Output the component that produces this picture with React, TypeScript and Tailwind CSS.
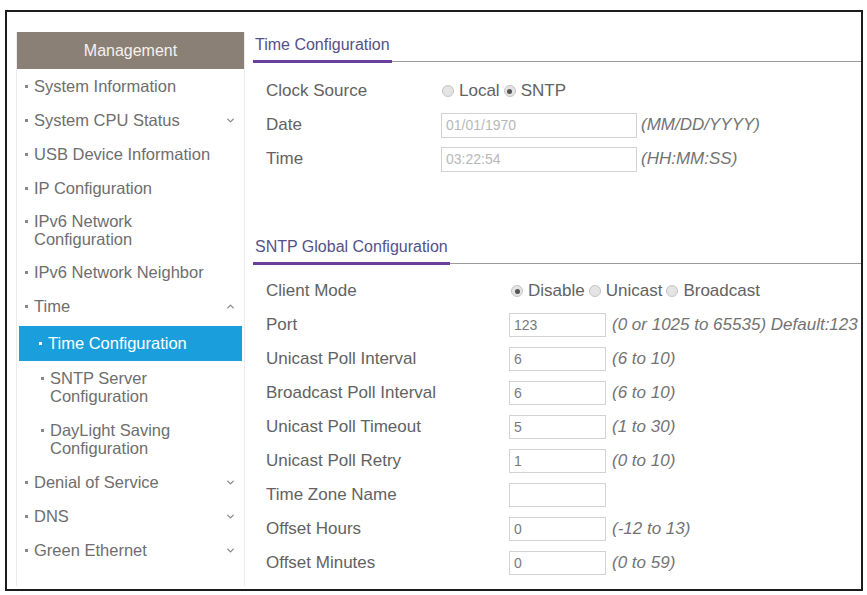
import { ChevronDown, ChevronUp } from "lucide-react";

type NavItem = {
  lines: string[];
  sub?: boolean;
  active?: boolean;
  chevron?: "down" | "up";
};

const navItems: NavItem[] = [
  { lines: ["System Information"] },
  { lines: ["System CPU Status"], chevron: "down" },
  { lines: ["USB Device Information"] },
  { lines: ["IP Configuration"] },
  { lines: ["IPv6 Network", "Configuration"] },
  { lines: ["IPv6 Network Neighbor"] },
  { lines: ["Time"], chevron: "up" },
  { lines: ["Time Configuration"], sub: true, active: true },
  { lines: ["SNTP Server", "Configuration"], sub: true },
  { lines: ["DayLight Saving", "Configuration"], sub: true },
  { lines: ["Denial of Service"], chevron: "down" },
  { lines: ["DNS"], chevron: "down" },
  { lines: ["Green Ethernet"], chevron: "down" },
];

function SideItem({ item }: { item: NavItem }) {
  if (item.active) {
    return (
      <div className="pt-[3px] px-[2px]">
        <div className="flex items-center h-[35px] pl-[20px] bg-[#1a9fdc] text-white">
          <span className="w-[3px] h-[3px] bg-white mr-[6px]" />
          <span>{item.lines[0]}</span>
        </div>
      </div>
    );
  }
  const twoLine = item.lines.length > 1;
  const height = twoLine ? (item.sub ? "h-[52px]" : "h-[50px]") : "h-[34px]";
  return (
    <div className={`flex items-center ${height} ${item.sub ? "pl-[24px]" : "pl-[8px]"} pr-[8px]`}>
      <div className="flex items-start flex-1 leading-[18px]">
        <span className="w-[3px] h-[3px] bg-[#888] mr-[6px] mt-[8px] shrink-0" />
        <div>
          {item.lines.map((l) => (
            <div key={l}>{l}</div>
          ))}
        </div>
      </div>
      {item.chevron === "down" && <ChevronDown size={11} strokeWidth={3} className="text-[#8a8a8a]" />}
      {item.chevron === "up" && <ChevronUp size={11} strokeWidth={3} className="text-[#8a8a8a]" />}
    </div>
  );
}

function Heading({ title }: { title: string }) {
  return (
    <div className="border-b border-[#9a9a9a]">
      <span className="inline-block text-[16px] leading-[20px] text-[#55508a] px-[2px] pb-[5px] border-b-[3px] border-[#6b3f9c] -mb-[2px]">
        {title}
      </span>
    </div>
  );
}

function Radio({ checked, label }: { checked?: boolean; label: string }) {
  return (
    <span className="inline-flex items-center mr-[4px]">
      <span className="w-[12px] h-[12px] rounded-full border border-[#c4c4c4] bg-[#e4e4e4] flex items-center justify-center mr-[5px]">
        {checked && <span className="w-[5px] h-[5px] rounded-full bg-[#555]" />}
      </span>
      <span>{label}</span>
    </span>
  );
}

function Row({ label, labelW, children }: { label: string; labelW: string; children: React.ReactNode }) {
  return (
    <div className="flex items-center h-[34px] pl-[13px]">
      <div className={`${labelW} shrink-0`}>{label}</div>
      {children}
    </div>
  );
}

function Field({ value, hint, wide, disabled }: { value: string; hint?: string; wide?: boolean; disabled?: boolean }) {
  return (
    <>
      <div
        className={`${wide ? "w-[196px] h-[25px]" : "w-[97px] h-[24px]"} border border-[#d2d2d2] flex items-center px-[4px] text-[14px] ${
          disabled ? "text-[#b8b8b8]" : "text-[#7a7a7a]"
        }`}
      >
        {value}
      </div>
      {hint && <span className={`italic text-[#737373] ${wide ? "ml-[4px]" : "ml-[6px]"}`}>{hint}</span>}
    </>
  );
}

export default function App() {
  const sntpRows = [
    { label: "Port", value: "123", hint: "(0 or 1025 to 65535) Default:123" },
    { label: "Unicast Poll Interval", value: "6", hint: "(6 to 10)" },
    { label: "Broadcast Poll Interval", value: "6", hint: "(6 to 10)" },
    { label: "Unicast Poll Timeout", value: "5", hint: "(1 to 30)" },
    { label: "Unicast Poll Retry", value: "1", hint: "(0 to 10)" },
    { label: "Time Zone Name", value: "", hint: "" },
    { label: "Offset Hours", value: "0", hint: "(-12 to 13)" },
    { label: "Offset Minutes", value: "0", hint: "(0 to 59)" },
  ];

  return (
    <div className="w-[867px] h-[595px] bg-white pt-[10px] pl-[5px]" style={{ fontFamily: '"Liberation Sans", Arial, sans-serif' }}>
      <div className="w-[858px] h-[581px] border-2 border-[#1c1c1c] flex pl-[9px] pt-[20px] pb-[3px]">
        {/* sidebar */}
        <div className="w-[229px] shrink-0 flex flex-col border-x border-[#ececec] text-[16.5px] text-[#6e6e6e]">
          <div className="h-[37px] bg-[#8b8075] text-[#f4f2f0] text-[16px] flex items-center justify-center">Management</div>
          {navItems.map((it) => (
            <SideItem key={it.lines.join(" ")} item={it} />
          ))}
        </div>

        {/* content */}
        <div className="flex-1 ml-[8px] text-[17px] text-[#626262]">
          <Heading title="Time Configuration" />
          <div className="mt-[12px]">
            <Row label="Clock Source" labelW="w-[176px]">
              <span className="flex items-center">
                <Radio label="Local" />
                <Radio checked label="SNTP" />
              </span>
            </Row>
            <Row label="Date" labelW="w-[175px]">
              <Field value="01/01/1970" hint="(MM/DD/YYYY)" wide disabled />
            </Row>
            <Row label="Time" labelW="w-[175px]">
              <Field value="03:22:54" hint="(HH:MM:SS)" wide disabled />
            </Row>
          </div>

          <div className="mt-[58px]">
            <Heading title="SNTP Global Configuration" />
          </div>
          <div className="mt-[10px]">
            <Row label="Client Mode" labelW="w-[245px]">
              <span className="flex items-center">
                <Radio checked label="Disable" />
                <Radio label="Unicast" />
                <Radio label="Broadcast" />
              </span>
            </Row>
            {sntpRows.map((r) => (
              <Row key={r.label} label={r.label} labelW="w-[243px]">
                <Field value={r.value} hint={r.hint} />
              </Row>
            ))}
          </div>
        </div>
      </div>
    </div>
  );
}
